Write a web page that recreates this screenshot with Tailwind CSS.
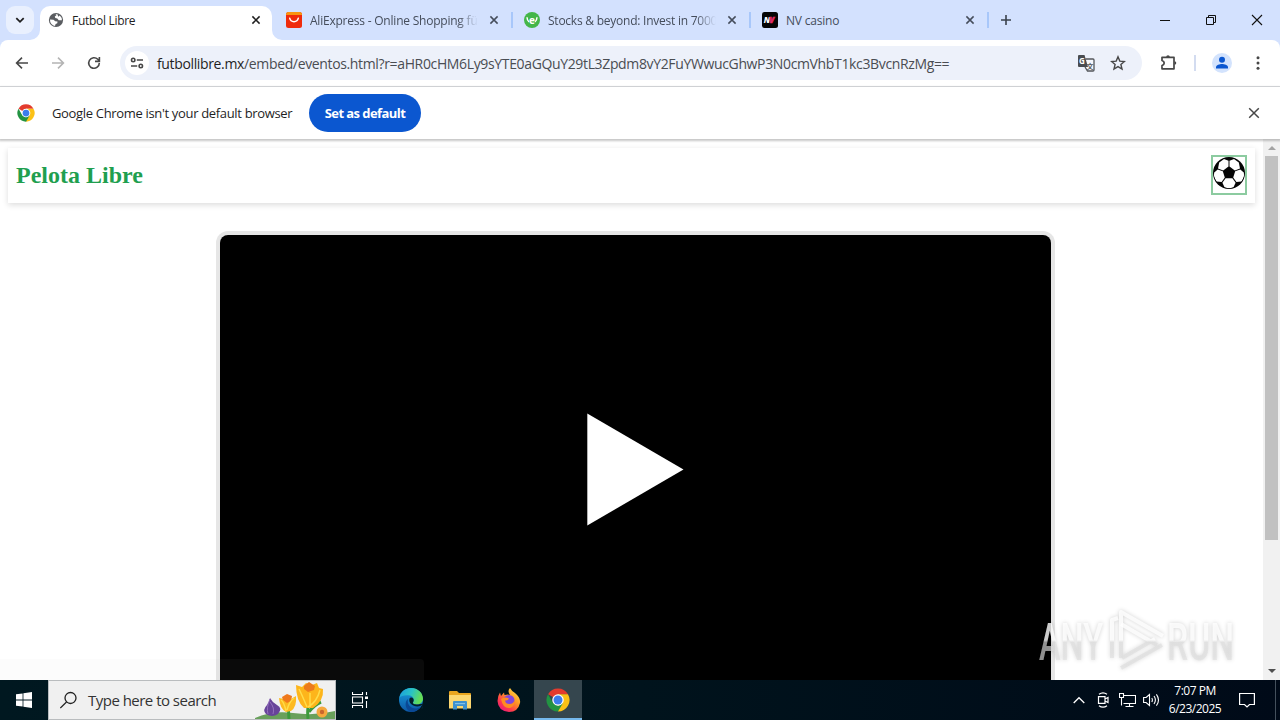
<!DOCTYPE html>
<html lang="en">
<head>
  <meta charset="UTF-8" />
  <meta name="viewport" content="width=device-width, initial-scale=1.0" />
  <title>Futbol Libre</title>
  <script src="https://cdn.jsdelivr.net/npm/@tailwindcss/browser@4"></script>
</head>
<body class="w-[1280px] h-[720px] overflow-hidden flex flex-col bg-white font-['Open_Sans','Noto_Sans',sans-serif] text-[#1f1f1f]">

  <!-- Tab strip -->
  <div class="h-10 shrink-0 bg-[#d3e1fe] flex items-start pt-1.5 pl-1.5">
    <button class="size-7 rounded-[9px] bg-[#e9f0fe] flex items-center justify-center mr-1.5">
      <svg class="size-3" viewBox="0 0 12 12" fill="none" stroke="#1f1f1f" stroke-width="1.8"><path d="M2.3 4.2 6 7.8l3.7-3.6" /></svg>
    </button>
    <div class="relative w-[232px] h-[34px] bg-white rounded-t-[10px] flex items-center px-2 pb-[6px]">
      <svg class="absolute -left-2.5 bottom-0 size-2.5" viewBox="0 0 10 10" fill="#fff"><path d="M10 0v10H0A10 10 0 0 0 10 0z" /></svg>
      <svg class="absolute -right-2.5 bottom-0 size-2.5" viewBox="0 0 10 10" fill="#fff"><path d="M0 0v10h10A10 10 0 0 1 0 0z" /></svg>
      <svg class="size-4 shrink-0" viewBox="0 0 16 16">
        <circle cx="8" cy="8" r="7.1" fill="#5a5d61" />
        <path d="M2 7.500 5.500 7.800 7.200 9.200 9.500 9.500 9.300 11.300 7.600 12 7 13.900A6 6 0 0 1 2 7.500zM7.500 2.200 8.400 3.300 6.800 4.600 7.300 6 9.300 6.600 10.700 8.300 13.900 8.300A6 6 0 0 0 11.800 3.500L10.300 4.800 9.400 2.300z" fill="#fff" />
      </svg>
      <span class="ml-2 pt-0.5 text-[12px] tracking-[-0.3px] flex-1 whitespace-nowrap">Futbol Libre</span>
      <svg class="size-4" viewBox="0 0 16 16" stroke="#1f1f1f" stroke-width="1.5"><path d="m4.400 4.400 7.200 7.200m0-7.200-7.200 7.200" /></svg>
    </div>
    <div class="w-[238px] h-7 flex items-center pl-3.5">
      <svg class="size-4 shrink-0" viewBox="0 0 16 16">
        <rect width="16" height="16" rx="2.500" fill="#ef2b0c" />
        <path d="M0 3V2.500A2.500 2.500 0 0 1 2.500 0h11A2.500 2.500 0 0 1 16 2.500V3z" fill="#f99410" />
        <path d="M3.700 6.200a4.400 4.400 0 0 0 8.600 0" fill="none" stroke="#fff" stroke-width="1.500" stroke-linecap="round" />
      </svg>
      <span class="ml-2 pt-0.5 w-[168px] overflow-hidden whitespace-nowrap text-[12px] tracking-[-0.22px] text-[#454d5b] mask-r-from-88%">AliExpress - Online Shopping fü</span>
      <svg class="size-4 ml-2" viewBox="0 0 16 16" stroke="#454d5b" stroke-width="1.5"><path d="m4.400 4.400 7.200 7.200m0-7.200-7.200 7.200" /></svg>
      <div class="w-[2px] h-4 bg-[#a8c7fa] ml-auto -mr-[3px]"></div>
    </div>
    <div class="w-[238px] h-7 flex items-center pl-3.5">
      <svg class="size-4 shrink-0" viewBox="0 0 16 16">
        <circle cx="8" cy="8" r="8" fill="#44b649" />
        <path d="M3 5.200q.2 3.500 2 4.600M13 5.200q-.2 3.500-2 4.600" stroke="#fff" stroke-width="1.500" fill="none" />
        <text x="8" y="11.800" text-anchor="middle" font-size="10" font-weight="700" fill="#fff">e</text>
      </svg>
      <span class="ml-2 pt-0.5 w-[168px] overflow-hidden whitespace-nowrap text-[12px] tracking-[-0.24px] text-[#454d5b] mask-r-from-88%">Stocks &amp; beyond: Invest in 7000</span>
      <svg class="size-4 ml-2" viewBox="0 0 16 16" stroke="#454d5b" stroke-width="1.5"><path d="m4.400 4.400 7.200 7.200m0-7.200-7.200 7.200" /></svg>
      <div class="w-[2px] h-4 bg-[#a8c7fa] ml-auto -mr-[3px]"></div>
    </div>
    <div class="w-[238px] h-7 flex items-center pl-3.5">
      <svg class="size-4 shrink-0" viewBox="0 0 16 16" font-size="8" font-weight="800" font-style="italic">
        <rect width="16" height="16" rx="2.500" fill="#050505" />
        <text x="1.800" y="11" fill="#fff">N</text>
        <text x="7.300" y="11" fill="#e02a66" stroke="#e02a66" stroke-width=".6">V</text>
      </svg>
      <span class="ml-2 pt-0.5 w-[168px] whitespace-nowrap text-[12px] tracking-[-0.2px] text-[#454d5b]">NV casino</span>
      <svg class="size-4 ml-2" viewBox="0 0 16 16" stroke="#454d5b" stroke-width="1.5"><path d="m4.400 4.400 7.200 7.200m0-7.200-7.200 7.200" /></svg>
      <div class="w-[2px] h-4 bg-[#a8c7fa] ml-auto -mr-[3px]"></div>
    </div>
    <svg class="size-4 mt-1.5 ml-3" viewBox="0 0 16 16" stroke="#3a414c" stroke-width="1.6"><path d="M8 3v10M3 8h10" /></svg>
    <div class="ml-auto flex h-7 items-center gap-[34px] pr-[17px]">
      <svg class="size-3" viewBox="0 0 12 12" stroke="#111" stroke-width="1"><path d="M1 6.500h10" /></svg>
      <svg class="size-3" viewBox="0 0 12 12" fill="none" stroke="#111" stroke-width="1"><path d="M1.500 3.500h7v7h-7zM3.500 3.500v-2h7v7h-2" /></svg>
      <svg class="size-3" viewBox="0 0 12 12" stroke="#111" stroke-width="1.100"><path d="m1 1 10 10m0-10L1 11" /></svg>
    </div>
  </div>

  <!-- Toolbar -->
  <div class="h-[47px] shrink-0 bg-[#d3e1fe]">
    <div class="h-full bg-white rounded-t-lg border-b border-[#dfe1e5] flex items-center pl-3.5">
      <svg class="size-4" viewBox="0 0 16 16" fill="none" stroke="#474747" stroke-width="1.600"><path d="M14 8H2.800M8 2.600 2.600 8 8 13.400" /></svg>
      <svg class="size-4 ml-5" viewBox="0 0 16 16" fill="none" stroke="#b4b4b4" stroke-width="1.600"><path d="M2 8h11.200M8 2.600 13.400 8 8 13.400" /></svg>
      <svg class="size-4 ml-5" viewBox="0 0 16 16" fill="none" stroke="#474747" stroke-width="1.600"><path d="M13.300 8A5.300 5.300 0 1 1 11.800 4.300L13.300 5.800M13.400 2v4.400H9" /></svg>
      <div class="ml-[18px] w-[1022px] h-[34px] rounded-full bg-[#edf1fa] flex items-center pl-[5px] pr-4">
        <div class="size-6 rounded-full bg-white flex items-center justify-center">
          <svg class="size-4" viewBox="0 0 16 16" fill="none" stroke="#474747" stroke-width="1.600"><circle cx="4.200" cy="5" r="1.700" /><path d="M7.800 5H14M2 11h6.200" /><circle cx="11.800" cy="11" r="1.700" /></svg>
        </div>
        <div id="url" class="ml-2 text-[14px] whitespace-nowrap tracking-[-0.355px] text-[#4a4d52] flex-1"><span class="text-[#1f1f1f]">futbollibre.mx</span>/embed/eventos.html?r=aHR0cHM6Ly9sYTE0aGQuY29tL3Zpdm8vY2FuYWwucGhwP3N0cmVhbT1kc3BvcnRzMg==</div>
        <svg class="size-[18px]" viewBox="0 0 18 18">
          <path d="M8.500 5H16a1 1 0 0 1 1 1V16a1 1 0 0 1-1 1H10.500L8 13" fill="#f5f7fc" stroke="#54575b" stroke-width="1.300" />
          <path d="M2 1h5.500l3.500 12H2a1 1 0 0 1-1-1V2a1 1 0 0 1 1-1z" fill="#494c50" />
          <text x="2" y="10" font-size="8" font-weight="700" fill="#fff">G</text>
          <text x="9.500" y="14.500" font-size="7" font-weight="700" font-family="Noto Sans CJK SC, sans-serif" fill="#54575b">文</text>
        </svg>
        <svg class="size-4 ml-[15px]" viewBox="0 0 16 16" fill="none" stroke="#474747" stroke-width="1.400"><path d="m8 1.800 1.800 4.300 4.600.4-3.500 3 1.100 4.600L8 11.600l-4 2.500 1.100-4.600-3.500-3 4.600-.4z" /></svg>
      </div>
      <svg class="size-[18px] ml-[18px]" viewBox="0 0 18 18"><path d="M2 3.300h12v11.500H2v-3.200q2.200-.6 2.200-2.500T2 6.500z" fill="none" stroke="#474747" stroke-width="1.700" stroke-linejoin="round" /><path d="M6.200 3a1.800 1.800 0 0 1 3.600 0zM14.500 7.200a1.800 1.800 0 0 1 0 3.600z" fill="#474747" /></svg>
      <div class="w-[2px] h-4 bg-[#d3dcf0] ml-4"></div>
      <svg class="size-5 ml-4" viewBox="0 0 20 20"><circle cx="10" cy="10" r="10" fill="#d3e3fd" /><circle cx="10" cy="6.800" r="3" fill="#0b57d0" /><path d="M4 15.500v-1.400c0-2 3.700-3.100 6-3.100s6 1.100 6 3.100v1.400z" fill="#0b57d0" /></svg>
      <svg class="size-4 ml-[18px]" viewBox="0 0 16 16" fill="#474747"><circle cx="8" cy="2.800" r="1.500" /><circle cx="8" cy="8" r="1.500" /><circle cx="8" cy="13.200" r="1.500" /></svg>
    </div>
  </div>

  <!-- Default browser infobar -->
  <div class="relative z-10 h-[52px] shrink-0 bg-white flex items-center pl-[17px] pr-[18px] shadow-[0_1px_2px_1px_rgba(0,0,0,0.22)]">
    <svg class="size-[18px]" viewBox="0 0 48 48">
      <path d="M24 24 4.080 12.500A23 23 0 0 1 43.920 12.500H24z" fill="#e33b2e" />
      <path d="M24 12.500H43.920A23 23 0 0 1 24 47L22 24z" fill="#fbc116" />
      <path d="M4.080 12.500 14.040 29.750 24 35.500 33.960 29.750 24 47A23 23 0 0 1 4.080 12.500z" fill="#229342" />
      <circle cx="24" cy="24" r="11.500" fill="#fff" /><circle cx="24" cy="24" r="9" fill="#3b7ded" />
    </svg>
    <span class="ml-[17px] pt-0.5 w-[241px] whitespace-nowrap text-[13px] tracking-[-0.33px]">Google Chrome isn't your default browser</span>
    <button class="ml-4 pt-0.5 w-28 h-[38px] rounded-full bg-[#0b57d0] text-white text-[13px] font-bold tracking-[-0.57px] whitespace-nowrap">Set as default</button>
    <svg class="size-4 ml-auto" viewBox="0 0 16 16" stroke="#474747" stroke-width="1.500"><path d="m3.200 3.200 9.600 9.600m0-9.600-9.600 9.600" /></svg>
  </div>

  <!-- Page -->
  <div class="relative h-[541px] shrink-0 flex overflow-hidden bg-white">
    <main class="w-[1263px] pt-[9px] px-2">
      <header class="h-[55px] bg-white shadow-[0_2px_6px_rgba(0,0,0,0.14)] flex items-center justify-between px-2 pb-0.5">
        <h1 class="font-['Liberation_Serif',serif] font-bold text-[24px] leading-7 text-[#1f9f4f]">Pelota Libre</h1>
        <div class="w-9 h-10 border-2 border-[#8ccba0] flex justify-center">
          <svg class="size-8" viewBox="-16 -16 32 32">
            <defs><clipPath id="ball"><circle r="15.200" /></clipPath></defs>
            <circle r="16" fill="#050505" />
            <g clip-path="url(#ball)" fill="#fff">
              <path d="M-.5-12.200V-6.500L-5.800-2.600-11-4.400-9.800-10.500-5-14z" />
              <path d="M.5-12.200V-6.500L5.800-2.600 11-4.400 9.800-10.500 5-14z" />
              <path d="M-11.300-3.400-6.200-1.800-4.200 4.600-7.400 9-12.500 8.500-15.200 3.500-14.800-.5z" />
              <path d="M11.300-3.400 6.200-1.800 4.200 4.600 7.400 9 12.500 8.500 15.200 3.500 14.800-.5z" />
              <path d="M-3.400 5.300H3.400L6.600 9.700 4.500 14.200 0 15.400-4.500 14.200-6.600 9.700z" />
            </g>
          </svg>
        </div>
      </header>
      <div class="mt-8 ml-[212px] w-[831px] h-[468px] bg-black rounded-lg shadow-[0_0_0_4px_#e6e6e6] flex justify-center">
        <svg class="w-[97px] h-[113px] mt-[178px]" viewBox="0 0 97 113"><path d="M.3.500 96.500 56.500.3 112.500z" fill="#fff" /></svg>
      </div>
    </main>
    <div class="w-[17px] h-full bg-[#f1f1f1] flex flex-col items-center">
      <div class="h-[17px] flex items-center"><svg class="w-2 h-1" viewBox="0 0 8 4"><path d="M0 4 4 0l4 4z" fill="#a3a3a3" /></svg></div>
      <div class="w-[13px] h-[384px] bg-[#c1c1c1]"></div>
      <div class="mt-auto h-[18px] flex items-center"><svg class="w-2 h-1" viewBox="0 0 8 4"><path d="M0 0l4 4 4-4z" fill="#505050" /></svg></div>
    </div>
    <!-- fading status bubble -->
    <div class="absolute left-0 bottom-0 w-[220px] h-[21px] bg-black/1"></div>
    <div class="absolute left-[220px] bottom-0 w-[204px] h-[21px] bg-white/4 rounded-tr-sm"></div>
    <!-- watermark -->
    <svg class="absolute left-[1030px] bottom-0 w-[220px] h-[80px] drop-shadow-[0_0_2px_rgba(0,0,0,0.22)]" viewBox="0 0 220 80">
      <defs><linearGradient id="wm" gradientUnits="userSpaceOnUse" x1="0" y1="0" x2="0" y2="80"><stop offset=".5" stop-color="#fff" stop-opacity=".8" /><stop offset=".53" stop-color="#dedede" stop-opacity=".65" /></linearGradient></defs>
      <g fill="url(#wm)" font-family="Roboto, sans-serif" font-size="52" font-weight="500">
        <text x="9" y="60" textLength="64" lengthAdjust="spacingAndGlyphs">ANY</text>
        <text x="137" y="60" textLength="67" lengthAdjust="spacingAndGlyphs">RUN</text>
      </g>
      <g fill="none" stroke="url(#wm)" stroke-width="4" stroke-linejoin="round">
        <path d="M82 58V20l6-2" />
        <path d="M91 58V12l42 24" />
        <path d="M91 24l36 21M92 58l33-19M91 68 132 45" />
      </g>
    </svg>
  </div>

  <!-- Taskbar -->
  <div class="h-10 shrink-0 bg-linear-to-r from-[#001820] via-[#00131c] to-[#000a18] flex items-center text-white">
    <div class="w-12 flex justify-center"><svg class="size-4" viewBox="0 0 16 16" fill="#fff"><path d="M0 2.300 6.600 1.400V7.600H0zM7.400 1.300 16 0v7.600H7.400zM0 8.400h6.600v6.200L0 13.700zM7.400 8.400H16V16l-8.600-1.200z" /></svg></div>
    <div class="w-72 h-10 bg-[#f0f0f0] border border-[#b9bcbe] flex items-center pl-[11px] overflow-hidden">
      <svg class="size-[18px]" viewBox="0 0 18 18" fill="none" stroke="#222" stroke-width="1.300"><circle cx="10.500" cy="7" r="5.500" /><path d="M6.500 11 .3 17" /></svg>
      <span class="ml-[10px] text-[15px] tracking-[-0.52px] whitespace-nowrap text-[#333]">Type here to search</span>
      <svg class="ml-auto shrink-0 w-20 h-[38px]" viewBox="2 0 80 38">
        <path d="M0 38q18-9 40-6t42-2v8z" fill="#69a05b" />
        <path d="M36 38q0-9-2-16M55 38q-1-11 1-18M56 31q5-7 12-10" fill="none" stroke="#3d9a3b" stroke-width="3" />
        <path d="M17 17q-1 5-3 7-5 5-1 9 6 4 12 0 5-6-1-9-5-3-7-7z" fill="#68449a" />
        <path d="M17 18q-4 9-2 15M17 21q5 6 3 12" fill="none" stroke="#9470bd" stroke-width="1" />
        <path d="M26 17l5 1 4-3 3 3 5-3q1 11-5 15l-5 1q-6-3-7-14z" fill="#fdb920" />
        <path d="M29 16l5-3 5 2-1 5-4 2-4-3z" fill="#ef781c" /><path d="M28 19q3 2 5 11M41 17q-5 4-7 12" stroke="#ffdc48" stroke-width="1.500" fill="none" />
        <path d="M43 4l6 2 4-4 6 2 5-2 2 5 4 1q1 12-10 19H51Q43 20 43 4z" fill="#fdb51b" />
        <path d="M51 5l5-4 6 4-1 4-6 2-4-3z" fill="#ec7b1c" /><path d="M46 8q3 6 8 18M67 9q-3 12-12 17M57 12v14" stroke="#ffdc4a" stroke-width="1.500" fill="none" />
        <circle cx="69" cy="31" r="5.500" fill="#f5a83d" /><circle cx="69" cy="31" r="2.200" fill="#c9662e" />
      </svg>
    </div>
    <div class="w-12 flex justify-center"><svg class="size-4" viewBox="0 0 16 16" fill="none" stroke="#fff"><path d="M.5 0v2.500h10V0M.5 5h10v6H.5zM.5 16v-2.500h10V16M14.500 0v3M14.500 9v7" stroke-width="1.100" /><path d="M13 4.500h3v2.500h-3z" fill="#fff" stroke="none" /></svg></div>
    <div class="w-[54px] flex justify-center">
      <svg class="size-6" viewBox="0 0 24 24">
        <defs><linearGradient id="eg" x1="0" y1="0" x2="1" y2="0.300"><stop stop-color="#199be0" /><stop offset=".55" stop-color="#2ac3c5" /><stop offset="1" stop-color="#65de55" /></linearGradient><linearGradient id="eb" x1="0" y1="0" x2="0" y2="1"><stop stop-color="#1aa0df" /><stop offset="1" stop-color="#0c56a5" /></linearGradient></defs>
        <circle cx="12" cy="12" r="12" fill="url(#eb)" />
        <path d="M.3 10C1.500 3.500 6.500 0 12 0c7 0 12 5 12 10.800 0 3.500-2.800 5.700-6 5.700-3 0-4.400-1-4-2 1.600-2 .8-7-4.500-7.200C5 7 1.500 8 .3 10z" fill="url(#eg)" />
        <path d="M9 11c-1.500 6 3.500 10.500 9.500 9.200 2.400-.6 3.700-2 3.700-2C20 22 16 24 12 24 6 22 5 14 9 11z" fill="#0a4895" />
        <path d="M10.500 10.500c-1.300 4.300 3 8 8 8 2 0 3.500-.8 4.400-1.500q1 .2.500 1.400-.7 1.200-1.700 2.100H24V16h-3c-3 1.200-8 .3-7-1.700 1-1.300.8-2.800.2-3.700-1-1.500-3-1.400-3.700-.1z" fill="#03202c" />
      </svg>
    </div>
    <div class="w-11 flex justify-center">
      <svg class="w-[22px] h-[19px]" viewBox="0 0 22 19"><path d="M0 1q0-1 1-1h7l2 2h11q1 0 1 1v4H0z" fill="#e9a51e" /><path d="M0 4h22v13.500H0z" fill="#fcd770" /><path d="M4 18.500V11q0-1 1-1h12q1 0 1 1v7.500h-4V15H8v3.500z" fill="#3e91cf" /><path d="M6 12h10v1.200H6z" fill="#82c0e8" /></svg>
    </div>
    <div class="w-[52px] flex justify-center pl-0.5">
      <svg class="size-6" viewBox="0 0 24 24">
        <defs><linearGradient id="ff" x1="1" y1="0" x2=".2" y2="1"><stop stop-color="#fff04a" /><stop offset=".45" stop-color="#ff9626" /><stop offset=".75" stop-color="#ff3b4b" /><stop offset="1" stop-color="#e7187d" /></linearGradient></defs>
        <path d="M3 4.500 4 8l3-3.500L7.500 7Q11 6 13 7 10 3 13 0q2 3.500 5 5 6 5 5 10-2 9-11 9Q1 23 .5 13 .5 8 3 4.500z" fill="url(#ff)" />
        <circle cx="12" cy="12.500" r="5.500" fill="#8246dc" /><path d="M4 11q4-2.500 8-.5-1 2.500-4 2 .5 3.500 4.500 3.500 4 0 5-4 1 6-4.500 8-7 1-9-9z" fill="#ff8b22" />
      </svg>
    </div>
    <div class="w-12 h-10 bg-[#35464e] border-b-2 border-[#76b9ed] flex items-center justify-center pt-0.5">
      <svg class="size-6" viewBox="0 0 48 48">
        <path d="M24 24 4.080 12.500A23 23 0 0 1 43.920 12.500H24z" fill="#e33b2e" />
        <path d="M24 12.500H43.920A23 23 0 0 1 24 47L22 24z" fill="#fbc116" />
        <path d="M4.080 12.500 14.040 29.750 24 35.500 33.960 29.750 24 47A23 23 0 0 1 4.080 12.500z" fill="#229342" />
        <circle cx="24" cy="24" r="11.500" fill="#fff" /><circle cx="24" cy="24" r="9" fill="#3b7ded" />
      </svg>
    </div>
    <div class="ml-auto flex items-center h-full">
      <svg class="w-3 h-2" viewBox="0 0 12 8" fill="none" stroke="#fff" stroke-width="1.300"><path d="m.7 7 5.300-5.300L11.300 7" /></svg>
      <svg class="w-3 h-4 ml-3" viewBox="0 0 12 16" fill="none" stroke="#fff" stroke-width="1.200"><path d="M1.500 4.600h6.500v6.800H1.500zM8 7l3-1.500v5L8 9M2 2.200q4-2.800 8 0M2 13.800q4 2.800 8 0" /></svg>
      <svg class="w-[17px] h-4 ml-2.5" viewBox="0 0 17 16" fill="none" stroke="#fff" stroke-width="1.100"><path d="M5 3.500h11.500v8H4.500M.5 1.500h4v4h-4zM2.500 5.500v8M10.500 11.500v3M6.500 14.500h8" /></svg>
      <svg class="w-[17px] h-4 ml-[7px]" viewBox="0 0 17 16" fill="none" stroke="#fff" stroke-width="1.100"><path d="M.6 5.500h2.500L6.500 2.500v11L3.100 10.500H.6zM8.800 6q1.200 2 0 4M11 4q2.800 4 0 8M13.400 2.300q4.200 5.700 0 11.400" /></svg>
      <div class="w-16 ml-[3px] text-center text-[12px] leading-[18px] tracking-[-0.5px] whitespace-nowrap"><div>7:07 PM</div><div>6/23/2025</div></div>
      <svg class="size-4 ml-3 mr-5" viewBox="0 0 16 16" fill="none" stroke="#fff" stroke-width="1.200"><path d="M.6 1.500h14.800v11H10.500L8 15l-2.500-2.500H.6z" /></svg>
      <div class="h-full border-l border-[#44505c] w-[5px]"></div>
    </div>
  </div>
</body>
</html>
